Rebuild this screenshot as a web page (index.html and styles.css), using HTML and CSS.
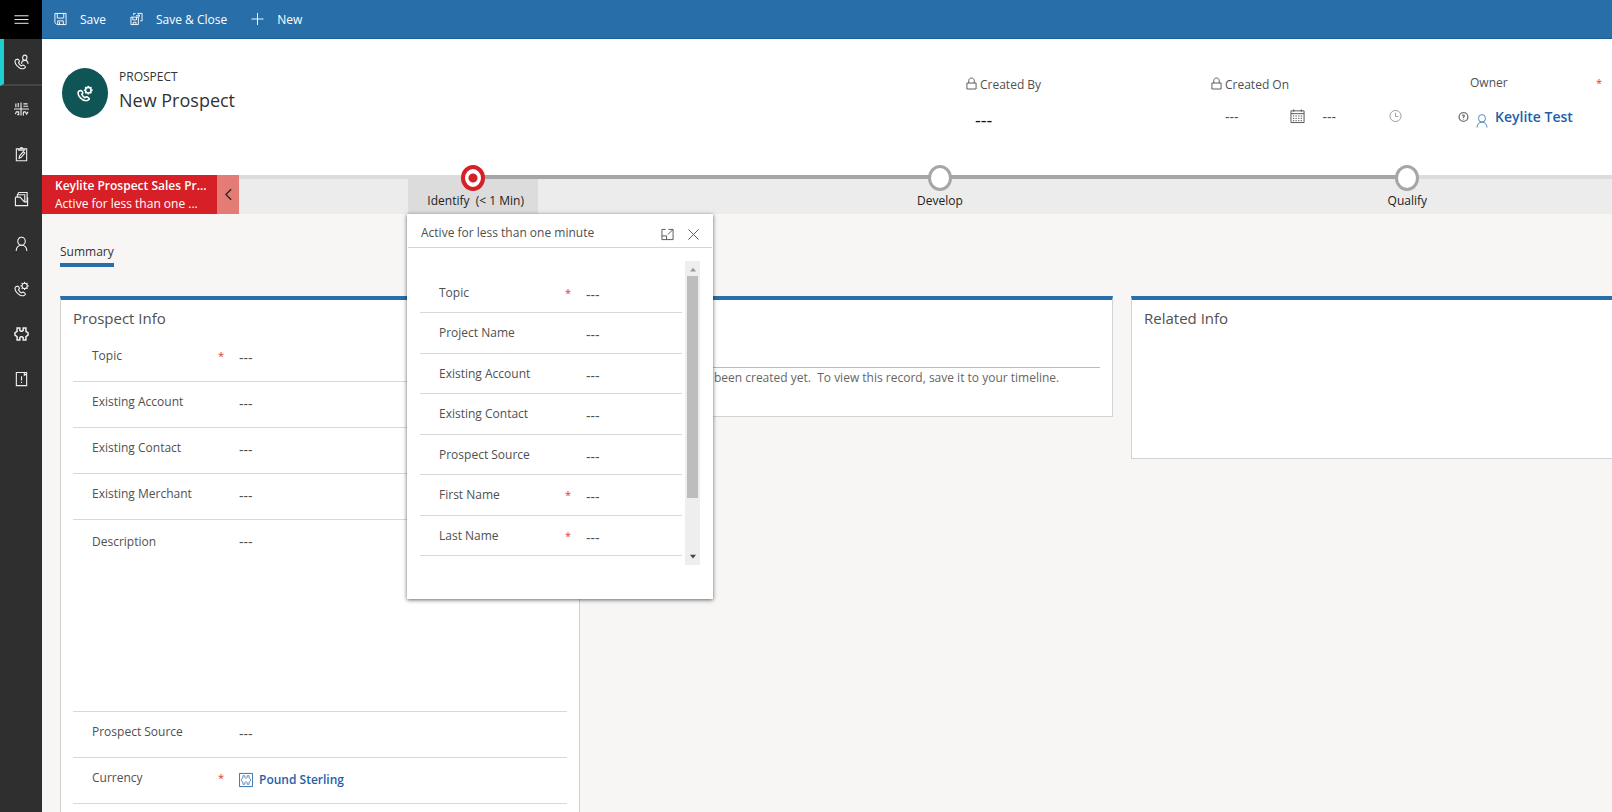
FILE: index.html
```html
<!DOCTYPE html>
<html lang="en">
<head>
    <meta charset="UTF-8">
    <meta name="viewport" content="width=device-width, initial-scale=1.0">
    <title>New Prospect</title>
    <link rel="stylesheet" href="styles.css">
</head>
<body>
    <!-- shared icons -->
    <svg class="sprite" aria-hidden="true">
        <symbol id="phone" viewBox="0 0 16 16">
            <path d="M3.500 5 1.600 5.800C-.5 9.500 5.500 16 10 15.300l2.200-1.600c.3-.6-2-2.600-2.700-2.400l-1.600.9C6.500 11.500 5.300 10 4.800 8.800l1-1.400C5.900 6.600 4.300 4.800 3.500 5z"/>
        </symbol>
        <symbol id="phone-gear" viewBox="0 0 16 16">
            <use href="#phone"/>
            <circle cx="11.300" cy="4.700" r="2.800"/>
            <path d="M11.300 .3v1.600M11.300 7.500v1.600M6.900 4.700h1.600M14.100 4.700h1.600M8.200 1.600l1.100 1.100M13.300 6.700l1.100 1.100M14.400 1.600l-1.100 1.100M9.300 6.700 8.200 7.800"/>
        </symbol>
        <symbol id="person" viewBox="0 0 16 16">
            <ellipse cx="8" cy="5" rx="4" ry="4.300"/>
            <path d="M2.300 15.500C2.500 11.700 4.500 9.300 8 9.300s5.500 2.400 5.700 6.200"/>
        </symbol>
        <symbol id="puzzle" viewBox="0 0 16 16">
            <path d="M3.300 1.500h2.900v2.700L7.300 5h1.400l1.100-.8V1.500h2.900v3.600L15 6.700v2.600l-2.300 1.600v3.600H9.800v-2.700L8.700 11H7.300l-1.100.8v2.700H3.300v-3.600L1 9.300V6.700l2.300-1.600z"/>
        </symbol>
        <symbol id="lock" viewBox="0 0 12 14">
            <path d="M1 6.500h10v6.500H1zM3 6.500V4c0-4 6-4 6 0v2.500"/>
        </symbol>
    </svg>

    <div class="app">
        <nav class="sidebar" aria-label="Site map">
            <button class="menu-button" aria-label="Expand site map">
                <svg viewBox="0 0 16 16"><path d="M.5 3.500h15M.5 7.500h15M.5 11.500h15"/></svg>
            </button>
            <a href="#" class="nav-item active" aria-label="Leads">
                <svg viewBox="0 0 16 16"><use href="#phone"/><ellipse cx="11.500" cy="3.500" rx="2.300" ry="2.800"/><path d="M8 10c.2-5 6.800-5 7 0"/></svg>
            </a>
            <a href="#" class="nav-item" aria-label="Regions">
                <svg viewBox="0 0 16 16"><path d="M0 8h16M7.500 1v14M2 2v4M4.500 1.500V6M10 2.500h4.500M10 5h5M1.500 13.500l1-2.500H5v3H3.500M10 11h2l1.500 2.500L15 11M10 11v4"/></svg>
            </a>
            <a href="#" class="nav-item" aria-label="Tasks">
                <svg viewBox="0 0 16 16"><path d="M2.500 2.500h11v12.700h-11zM5 4V2.500h1.500C6.500.5 9.500.5 9.500 2.500H11V4zM5.500 12.500l.5-2.500 4-4.500 1.500 1.500-3.800 4.500z"/></svg>
            </a>
            <a href="#" class="nav-item" aria-label="Accounts">
                <svg viewBox="0 0 16 16"><path d="M1.500 6h5l4.500 5h3.500M1.500 6v9h13V6M3.500 6V3.500L5 1h9v10M4 3.500h7.500V11"/></svg>
            </a>
            <a href="#" class="nav-item" aria-label="Contacts">
                <svg viewBox="0 0 16 16"><use href="#person"/></svg>
            </a>
            <a href="#" class="nav-item" aria-label="Prospects">
                <svg viewBox="0 0 16 16"><use href="#phone-gear"/></svg>
            </a>
            <a href="#" class="nav-item bold" aria-label="Merchants">
                <svg viewBox="0 0 16 16"><use href="#puzzle"/></svg>
            </a>
            <a href="#" class="nav-item" aria-label="Alerts">
                <svg viewBox="0 0 16 16"><path d="M2.500 1h11v14h-11zM11 1v3l1.200-1 1.300 1M8 5v4.500M8 11v1.200"/></svg>
            </a>
        </nav>

        <div class="page">
            <div class="command-bar">
                <button class="command">
                    <svg viewBox="0 0 14 14"><path d="M1 1h12v12H3l-2-2zM3.500 1v5h7V1M4 13V9h6v4M6 10v3"/></svg>
                    Save
                </button>
                <button class="command">
                    <svg viewBox="0 0 14 14"><path d="M1 5h8v8H1zM3 5v3h4V5M3.500 13v-2.500h3V13M4 3V1h2M8 1h5v8h-2M6.500 3.500h4M9 2l1.700 1.500L9 5"/></svg>
                    Save &amp; Close
                </button>
                <button class="command">
                    <svg viewBox="0 0 14 14"><path d="M7 .5v13M.5 7h13"/></svg>
                    New
                </button>
            </div>

            <header class="record-header">
                <div class="record-icon">
                    <svg viewBox="0 0 16 16"><use href="#phone-gear"/></svg>
                </div>
                <div class="record-title">
                    <p>PROSPECT</p>
                    <h1>New Prospect</h1>
                </div>
                <div class="header-fields">
                    <div class="header-field">
                        <div class="header-label">
                            <svg viewBox="0 0 12 14"><use href="#lock"/></svg>Created By
                        </div>
                        <div class="header-value created-by">---</div>
                    </div>
                    <div class="header-field">
                        <div class="header-label">
                            <svg viewBox="0 0 12 14"><use href="#lock"/></svg>Created On
                        </div>
                        <div class="header-value created-on">
                            <span>---</span>
                            <svg class="calendar" viewBox="0 0 16 16"><path d="M1 2.500h14v12.500H1zM1 5.500h14M4 1v2.500M12 1v2.500"/><path d="M3 8h10M3 10.500h10M3 13h10" stroke-dasharray="1.500 1.300"/></svg>
                            <span>---</span>
                            <svg class="clock" viewBox="0 0 14 14"><circle cx="7" cy="7" r="6"/><path d="M7 3.500V7.500h3"/></svg>
                        </div>
                    </div>
                    <div class="header-field">
                        <div class="header-label owner-label">Owner <span class="required">*</span></div>
                        <div class="header-value owner">
                            <svg class="presence" viewBox="0 0 12 12"><circle cx="6" cy="6" r="4.800"/><path d="M4.800 4.800c.2-1.400 2.400-1 2 .2L6 6v1M6 8v.8"/></svg>
                            <svg class="owner-icon" viewBox="0 0 16 16"><use href="#person"/></svg>
                            <a href="#">Keylite Test</a>
                        </div>
                    </div>
                </div>
            </header>

            <div class="process">
                <button class="process-name">
                    <strong>Keylite Prospect Sales Pr...</strong>
                    <span>Active for less than one ...</span>
                </button>
                <button class="process-collapse" aria-label="Collapse">
                    <svg viewBox="0 0 8 14"><path d="M7 1 1 7l6 6"/></svg>
                </button>
                <div class="stages-clip">
                    <div class="stages">
                        <div class="stage first current">
                            <span class="dot"></span>
                            <button class="stage-name">Identify&nbsp; (&lt; 1 Min)</button>
                        </div>
                        <div class="stage">
                            <span class="dot"></span>
                            <button class="stage-name">Develop</button>
                        </div>
                        <div class="stage last">
                            <span class="dot"></span>
                            <button class="stage-name">Qualify</button>
                        </div>
                    </div>
                </div>

                <section class="flyout">
                    <div class="flyout-header">
                        <h2>Active for less than one minute</h2>
                        <button aria-label="Dock">
                            <svg viewBox="0 0 14 14"><path d="M5 1.500H1v11h12V6M1 8.500h5v4M8 1.500h5V6M12.500 2 7.500 7"/></svg>
                        </button>
                        <button aria-label="Close">
                            <svg viewBox="0 0 14 14"><path d="m1.500 1.500 11 11M12.500 1.500l-11 11"/></svg>
                        </button>
                    </div>
                    <div class="flyout-body">
                        <div class="flyout-fields">
                            <div class="field"><label for="f-topic">Topic</label><span class="required">*</span><input id="f-topic" value="---"></div>
                            <div class="field"><label for="f-project">Project Name</label><input id="f-project" value="---"></div>
                            <div class="field"><label for="f-account">Existing Account</label><input id="f-account" value="---"></div>
                            <div class="field"><label for="f-contact">Existing Contact</label><input id="f-contact" value="---"></div>
                            <div class="field"><label for="f-source">Prospect Source</label><input id="f-source" value="---"></div>
                            <div class="field"><label for="f-first">First Name</label><span class="required">*</span><input id="f-first" value="---"></div>
                            <div class="field"><label for="f-last">Last Name</label><span class="required">*</span><input id="f-last" value="---"></div>
                        </div>
                        <div class="scrollbar">
                            <svg viewBox="0 0 8 5"><path d="M0 5 4 0l4 5z" fill="#999"/></svg>
                            <div class="thumb"></div>
                            <svg viewBox="0 0 8 5"><path d="M0 0h8L4 5z" fill="#444"/></svg>
                        </div>
                    </div>
                </section>
            </div>

            <main class="form">
                <div class="tabs">
                    <button class="tab">Summary</button>
                </div>
                <div class="columns">
                    <section class="card">
                        <h2>Prospect Info</h2>
                        <div class="field"><label for="topic">Topic</label><span class="required">*</span><input id="topic" value="---"></div>
                        <div class="field"><label for="account">Existing Account</label><input id="account" value="---"></div>
                        <div class="field"><label for="contact">Existing Contact</label><input id="contact" value="---"></div>
                        <div class="field"><label for="merchant">Existing Merchant</label><input id="merchant" value="---"></div>
                        <div class="field description"><label for="description">Description</label><textarea id="description">---</textarea></div>
                        <div class="field"><label for="source">Prospect Source</label><input id="source" value="---"></div>
                        <div class="field">
                            <span class="label">Currency</span><span class="required">*</span>
                            <a href="#" class="lookup"><svg viewBox="0 0 16 16"><path d="M.5.5h15v15H.5z"/><use href="#puzzle" x="2" y="2" width="12" height="12"/></svg>Pound Sterling</a>
                        </div>
                    </section>
                    <section class="card timeline">
                        <h2>Timeline</h2>
                        <p>This record hasn't been created yet.&nbsp; To view this record, save it to your timeline.</p>
                    </section>
                    <section class="card related">
                        <h2>Related Info</h2>
                    </section>
                </div>
            </main>
        </div>
    </div>
</body>
</html>
```

FILE: styles.css
```css
* {
    margin: 0;
    padding: 0;
    box-sizing: border-box;
}

body {
    background-color: #f7f6f5;
    color: #505050;
    font-family: "Open Sans", "Noto Sans", sans-serif;
    font-size: 12px;
    line-height: 18px;
    overflow: hidden;
}

button, input, textarea {
    font: inherit;
    color: inherit;
    background: none;
    border: none;
    outline: none;
}

a {
    color: #1f5fa8;
    text-decoration: none;
}

svg {
    fill: none;
    stroke: currentColor;
    stroke-width: 1;
    flex-shrink: 0;
}

.sprite {
    display: none;
}

.app {
    display: flex;
    height: 100vh;
}

/* sidebar */
.sidebar {
    display: flex;
    flex-direction: column;
    width: 42px;
    flex-shrink: 0;
    background-color: #2f2f2f;
    color: #fff;
}

.sidebar svg {
    width: 15px;
    height: 16px;
    stroke-width: 1.2;
}

.menu-button {
    height: 39px;
    background-color: #000;
    color: #fff;
    padding-top: 5px;
}

.sidebar .menu-button svg {
    stroke-width: 1;
}

.nav-item {
    display: flex;
    align-items: center;
    justify-content: center;
    height: 45px;
    color: #eee;
}

.nav-item.active {
    height: 47px;
    border-left: 4px solid #1fcfcf;
    border-bottom: 2px solid #444;
    padding-right: 4px;
}

.nav-item.bold svg {
    stroke-width: 1.6;
}

.page {
    display: flex;
    flex-direction: column;
    flex: 1;
    min-width: 0;
}

/* command bar */
.command-bar {
    display: flex;
    align-items: center;
    gap: 24px;
    height: 39px;
    flex-shrink: 0;
    padding: 2px 0 0 12px;
    background-color: #286ea9;
    border-bottom: 1px solid #1b5e98;
    color: #fff;
}

.command {
    display: flex;
    align-items: center;
    gap: 13px;
}

.command svg {
    width: 13px;
    height: 14px;
    margin-bottom: 2px;
}

/* record header */
.record-header {
    display: flex;
    height: 136px;
    flex-shrink: 0;
    padding-left: 20px;
    background-color: #fff;
}

.record-icon {
    display: flex;
    align-items: center;
    justify-content: center;
    width: 46px;
    height: 50px;
    margin-top: 29px;
    border-radius: 50%;
    background-color: #0f5556;
    color: #fff;
}

.record-icon svg {
    width: 16px;
    height: 17px;
    stroke-width: 1.6;
}

.record-title {
    margin: 29px auto 0 11px;
    color: #333;
}

.record-title h1 {
    font-size: 18px;
    font-weight: 400;
    line-height: 28px;
}

.header-fields {
    display: grid;
    grid-template-columns: 245px 247px 154px;
    padding-top: 36px;
}

.header-label {
    display: flex;
    align-items: center;
    gap: 3px;
    height: 20px;
}

.header-label svg {
    width: 11px;
    height: 15px;
    margin-bottom: 4px;
}

.header-value {
    display: flex;
    align-items: center;
    height: 44px;
    font-size: 14px;
}

.created-by {
    padding: 6px 0 0 9px;
    font-size: 18px;
    color: #111;
}

.created-on {
    padding-left: 14px;
}

.created-on .calendar {
    width: 15px;
    height: 16px;
    margin: 0 18px 2px 51px;
}

.created-on .clock {
    width: 13px;
    height: 14px;
    margin: 0 0 2px 53px;
    color: #999;
}

.owner-label {
    justify-content: space-between;
    padding: 0 10px 4px 12px;
}

.owner .presence {
    width: 11px;
    height: 12px;
    margin-right: 6px;
    color: #777;
    stroke-width: 1.5;
}

.owner .owner-icon {
    width: 14px;
    height: 16px;
    margin: 8px 6px 0 0;
    color: #3b78b8;
}

.owner a {
    font-size: 14px;
    font-weight: 600;
}

.required {
    color: #e03a2f;
    font-size: 11px;
}

/* business process flow */
.process {
    position: relative;
    display: flex;
    height: 39px;
    flex-shrink: 0;
    background-color: #ececec;
}

.process-name {
    display: flex;
    flex-direction: column;
    align-items: flex-start;
    width: 175px;
    flex-shrink: 0;
    padding: 2px 0 0 13px;
    background-color: #d61f26;
    color: #fff;
    white-space: nowrap;
}

.process-name strong {
    font-weight: 600;
}

.process-collapse {
    width: 22px;
    flex-shrink: 0;
    padding-top: 4px;
    background-color: #e57b75;
    color: #222;
}

.process-collapse svg {
    width: 7px;
    height: 13px;
    stroke-width: 1.5;
}

/* the last stage runs past the right edge of the window */
.stages-clip {
    flex: 1;
    min-width: 0;
}

.stages {
    display: flex;
    width: calc(100% + 29px);
}

.stage {
    position: relative;
    display: flex;
    justify-content: center;
    flex: 1;
    height: 39px;
    border-top: 4px solid #a6a6a6;
}

.stage.first, .stage.last {
    border-top-color: #dcdcdc;
}

.stage.first::before, .stage.last::before {
    content: "";
    position: absolute;
    top: -4px;
    left: 50%;
    right: 0;
    height: 4px;
    background-color: #a6a6a6;
}

.stage.last::before {
    left: 0;
    right: 50%;
}

.dot {
    position: absolute;
    top: -14px;
    left: 50%;
    width: 24px;
    height: 26px;
    margin-left: -12px;
    border: 3px solid #a6a6a6;
    border-radius: 50%;
    background-color: #fff;
}

.current .dot {
    border-width: 4px;
    border-color: #d61f26;
    background: radial-gradient(circle, #d61f26 4px, #fff 5px);
}

.stage-name {
    min-width: 130px;
    padding-top: 9px;
    color: #222;
}

.current .stage-name {
    padding-left: 6px;
    background-color: #dcdcdc;
}

/* stage flyout */
.flyout {
    position: absolute;
    top: 39px;
    left: 365px;
    width: 306px;
    padding-bottom: 34px;
    background-color: #fff;
    box-shadow: 0 1px 4px rgba(0, 0, 0, 0.6);
    z-index: 1;
}

.flyout-header {
    display: flex;
    align-items: center;
    gap: 13px;
    height: 34px;
    margin: 0 1px;
    padding: 4px 12px 0 13px;
    border-bottom: 1px solid #d5d5d5;
}

.flyout-header h2 {
    flex: 1;
    font-size: 12px;
    font-weight: 400;
}

.flyout-header button {
    display: flex;
    padding-top: 4px;
}

.flyout-header svg {
    width: 13px;
    height: 13px;
}

.flyout-body {
    display: flex;
    gap: 3px;
    padding: 13px 13px 0 13px;
}

.flyout-fields {
    display: flex;
    flex-direction: column;
    flex: 1;
    padding: 12px 0 9px;
}

.scrollbar {
    display: flex;
    flex-direction: column;
    align-items: center;
    justify-content: space-between;
    width: 15px;
    height: 304px;
    padding: 6px 0;
    background-color: #eee;
}

.scrollbar svg {
    width: 6px;
    height: 5px;
    stroke: none;
}

.thumb {
    width: 11px;
    height: 222px;
    margin: 4px 0 auto;
    background-color: #bdbdbd;
}

/* fields */
.field {
    display: grid;
    grid-template-columns: 126px 21px 1fr;
    height: 46px;
    padding: 11px 0 0 19px;
    border-bottom: 1px solid #d8d8d8;
}

.field input, .field textarea, .field .lookup {
    grid-column: 3;
    width: 100%;
    min-width: 0;
    height: 18px;
    margin-top: 2px;
    font-size: 14px;
    resize: none;
}

.field .lookup {
    display: flex;
    align-items: center;
    gap: 6px;
    font-size: 12px;
    font-weight: 600;
}

.lookup svg {
    width: 14px;
    height: 16px;
}

.flyout .field {
    flex: 1;
}

.field.description {
    height: 192px;
    padding-top: 13px;
}

.description textarea {
    height: 160px;
    margin-top: 0;
}

/* form */
.form {
    flex: 1;
    min-height: 0;
    padding: 26px 0 0 18px;
}

.tab {
    height: 27px;
    padding-top: 1px;
    border-bottom: 4px solid #286ea9;
    color: #333;
    font-weight: 500;
}

.columns {
    display: grid;
    grid-template-columns: 520fr 515fr 515fr;
    align-items: start;
    gap: 18px;
    width: calc(100% + 34px);
    margin-top: 29px;
}

.card {
    padding: 0 12px 20px;
    background-color: #fff;
    border: 1px solid #d2d2d2;
    border-top: 4px solid #286ea9;
}

.card h2 {
    height: 36px;
    padding-top: 7px;
    font-size: 15px;
    font-weight: 400;
    line-height: 22px;
}

.timeline {
    height: 121px;
}

.timeline h2 {
    height: 68px;
    border-bottom: 1px solid #bbb;
}

.timeline p {
    padding-top: 1px;
    color: #666;
    white-space: nowrap;
}

.related {
    height: 163px;
}
```
